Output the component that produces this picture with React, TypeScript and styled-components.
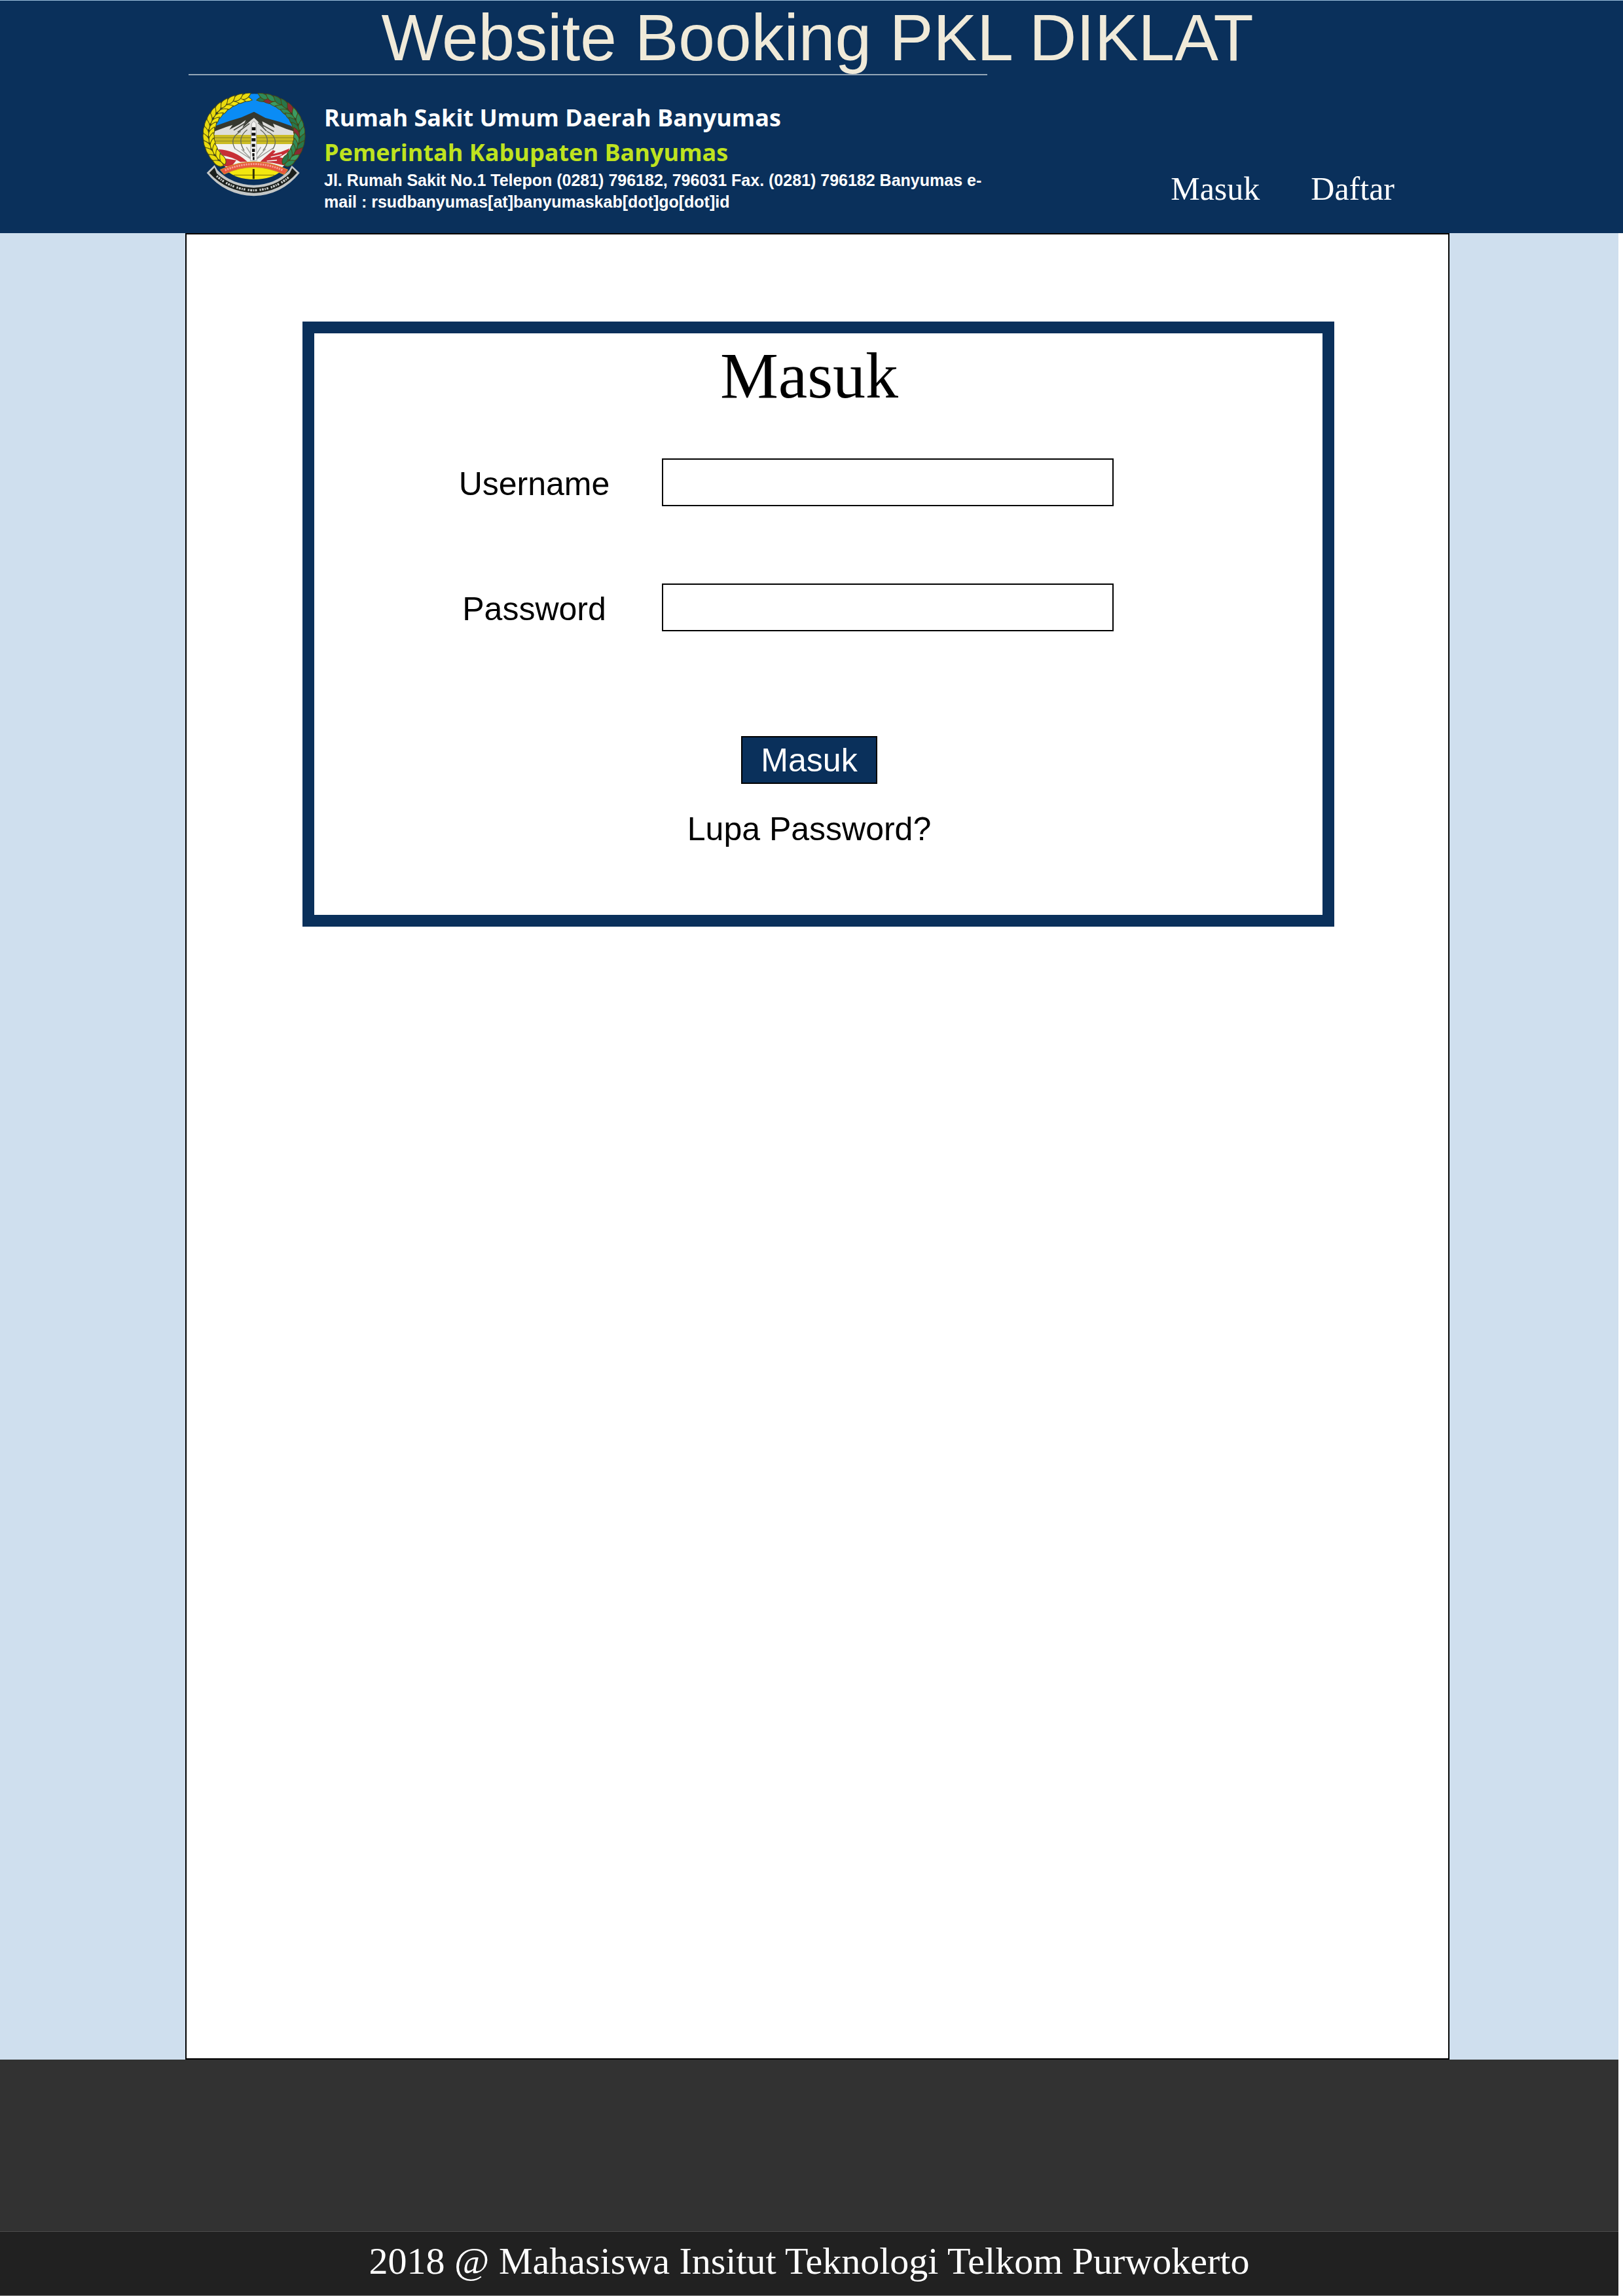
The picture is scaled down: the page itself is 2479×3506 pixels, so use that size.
import React from 'react';
import styled, { createGlobalStyle } from 'styled-components';

const navy = '#0a305b';
const sans = `'Liberation Sans', Arial, sans-serif`;
const serif = `'Liberation Serif', 'Times New Roman', serif`;

const GlobalStyle = createGlobalStyle`
  *, *::before, *::after { box-sizing: border-box; }
  body { margin: 0; background: #fff; }
`;

const Page = styled.div`
  display: flex;
  flex-direction: column;
  min-height: 100vh;
`;

const Header = styled.header`
  background: ${navy};
  border-top: 1px solid #9dbfdc;
  padding: 0 265px 0 283px;
`;

const SiteTitle = styled.h1`
  margin: 0;
  font: 400 100px/112px ${sans};
  color: #f0ead9;
  text-align: center;
`;

const Rule = styled.hr`
  width: 1220px;
  max-width: 100%;
  height: 2px;
  margin: 0 0 0 5px;
  border: 0;
  background: #94a5b6;
`;

const HeaderRow = styled.div`
  display: flex;
  justify-content: space-between;
  padding: 27px 84px 31px 26px;
`;

const Brand = styled.div`
  display: flex;
  gap: 28px;
`;

const BrandText = styled.div`
  padding-top: 11px;
`;

const BrandLine = styled.p<{ $color: string }>`
  margin: 0;
  font: 700 36px/53px 'Open Sans', sans-serif;
  color: ${(p) => p.$color};
`;

const Address = styled.address`
  font: 700 25px/33px ${sans};
  color: #fff;
`;

const Nav = styled.nav`
  display: flex;
  gap: 78px;
  align-self: flex-end;
  padding-bottom: 8px;
`;

const NavLink = styled.a`
  font: 400 50px/58px ${serif};
  color: #fff;
  text-decoration: none;
`;

const Backdrop = styled.main`
  flex: 1;
  display: flex;
  margin-right: 7px;
  padding: 0 258px 0 283px;
  background: #cfdfee;
`;

const Sheet = styled.div`
  flex: 1;
  padding: 133px 174px 133px 177px;
  background: #fff;
  border: 2px solid #000;
`;

const Card = styled.form`
  display: flex;
  flex-direction: column;
  align-items: center;
  padding: 9px 28px 102px 0;
  border: 18px solid ${navy};
`;

const CardTitle = styled.h2`
  margin: 0 0 70px;
  font: 400 100px/112px ${serif};
  color: #000;
`;

const Fields = styled.div`
  display: grid;
  gap: 118px;
  align-self: stretch;
  padding-left: 216px;
`;

const Field = styled.div`
  display: grid;
  grid-template-columns: 240px minmax(0, 690px);
  column-gap: 75px;
  align-items: center;
`;

const Label = styled.label`
  padding-top: 4px;
  font: 400 50px/58px ${sans};
  color: #000;
  text-align: center;
`;

const Input = styled.input`
  width: 100%;
  height: 73px;
  padding: 0 16px;
  font: 400 50px/58px ${sans};
  background: #fff;
  border: 2px solid #000;
  border-radius: 0;
`;

const Submit = styled.button`
  width: 208px;
  height: 73px;
  margin: 160px 0 40px;
  padding: 0;
  font: 400 50px/58px ${sans};
  color: #fff;
  background: ${navy};
  border: 2px solid #000;
  cursor: pointer;
`;

const ForgotLink = styled.a`
  font: 400 50px/58px ${sans};
  color: #000;
  text-decoration: none;
`;

const Footer = styled.footer`
  margin-right: 7px;
  background: #323232;
  padding-top: 262px;
`;

const Copyright = styled.p`
  margin: 0;
  padding: 12px 0 19px;
  border-top: 1px solid #4c4c4c;
  border-bottom: 1px solid #8a8a8a;
  background: #212121;
  font: 400 58px/66px ${serif};
  color: #fff;
  text-align: center;
`;

const Emblem = styled.svg`
  flex: none;
  width: 158px;
  height: 158px;
`;

type Leaf = { x: number; y: number; angle: number; fill: string };

/* Two rows of leaves following an elliptical arc, angles in degrees. */
function wreath(from: number, to: number, count: number, colors: string[]): Leaf[] {
  const leaves: Leaf[] = [];
  for (let i = 0; i < count; i += 1) {
    const deg = from + ((to - from) * i) / (count - 1);
    const t = (deg * Math.PI) / 180;
    const taper = Math.min(1, 0.5 + i / 8);
    const dir = Math.sign(from - to);
    const heading = (Math.atan2(184 * Math.cos(t), -205 * Math.sin(t)) * 180) / Math.PI + (dir > 0 ? 0 : 180);
    [-1, 1].forEach((side) => {
      const r = side * 14 * taper;
      leaves.push({
        x: 293 + (208 + r) * Math.cos(t),
        y: 230 + (176 + r) * Math.sin(t),
        angle: heading + side * dir * -20,
        fill: colors[(i * 2 + (side > 0 ? 1 : 0)) % colors.length],
      });
    });
  }
  return leaves;
}

const rice = wreath(260, 138, 14, ['#f2e410', '#e9da0e']);
const cotton = wreath(281, 402, 14, ['#27764a', '#2f8a58', '#8a2a33', '#2f8a58', '#3a9b62', '#27764a', '#2f8a58']);

function Logo() {
  return (
    <Emblem viewBox="56 36 474 474" role="img" aria-label="Lambang Kabupaten Banyumas">
      <defs>
        <clipPath id="shield">
          <ellipse cx="293" cy="232" rx="196" ry="192" />
        </clipPath>
      </defs>
      <g clipPath="url(#shield)">
        <rect x="90" y="36" width="410" height="170" fill="#0a8cf5" />
        <rect x="90" y="186" width="410" height="250" fill="#f2f2f0" />
        <path d="M90 196 L180 164 L235 148 L293 122 L345 150 L410 168 L500 200 V226 H90Z" fill="#35382f" />
        <path d="M100 216 L165 192 L195 182 L180 204 L230 178 L255 160 L240 196 L280 160 L293 150 L306 162 L338 194 L330 166 L388 196 L380 176 L440 200 L490 216 V234 H100Z" fill="#dededb" />
        <path d="M200 206 L262 168 M218 216 L272 176 M320 176 L384 212 M312 172 L350 210" stroke="#4a4d46" strokeWidth="5" />
        <rect x="100" y="228" width="390" height="42" fill="#cbbc24" />
        <path d="M100 241 H490 M100 256 H490" stroke="#8f8520" strokeWidth="3" />
        <path d="M232 212 C190 236 190 262 206 292 M262 204 C222 236 228 268 248 300 M352 212 C396 232 398 266 378 294 M322 204 C366 236 360 270 334 300" fill="none" stroke="#66695a" strokeWidth="4" />
        <path d="M204 290 L284 342 L236 294 M378 290 L300 342 L346 292 M258 284 L288 330 M324 284 L296 330" fill="none" stroke="#9a9a96" strokeWidth="4" />
        <path d="M130 294 Q200 296 262 350 L230 352 Q190 328 148 322Z M148 334 L212 344 L190 372 L144 372Z" fill="#c72f36" />
        <path d="M322 350 Q360 316 380 298 L392 302 L380 316 L416 306 L456 290 L450 306 L410 330 L440 338 V370 L380 356Z" fill="#c72f36" />
        <path d="M370 330 L420 318 M352 348 L398 344" stroke="#f2f2f0" strokeWidth="5" />
        <path d="M282 176 L292 164 L302 176 L306 346 H276Z" fill="#f4f4f2" stroke="#888" strokeWidth="2" />
        <path d="M283 200h17M282 225h18M282 250h18M283 276h15M284 299h13M285 319h10M287 336h8" stroke="#111" strokeWidth="14" />
      </g>
      <path d="M170 392 Q293 350 418 392 Q378 430 293 432 Q208 430 170 392Z" fill="#f3e70f" />
      <path d="M200 412 H386" stroke="#776d08" strokeWidth="3" />
      <path d="M291 384 V430" stroke="#333008" strokeWidth="9" />
      <g stroke="#4b4a12" strokeWidth="3">
        {[...rice, ...cotton].map((leaf, i) => (
          <path
            key={i}
            d="M-28 0 Q-8 -24 27 0 Q-8 24 -28 0Z"
            fill={leaf.fill}
            transform={`translate(${leaf.x} ${leaf.y}) rotate(${leaf.angle})`}
          />
        ))}
      </g>
      <path d="M138 388 Q293 314 448 388 L432 410 Q293 344 156 408Z" fill="#e8573f" stroke="#d29b27" strokeWidth="3" />
      <path d="M160 390 Q293 333 426 390" fill="none" stroke="#f6a090" strokeWidth="9" strokeDasharray="7 4" />
      <path d="M112 366 L76 402 Q160 504 292 508 Q420 504 502 402 L466 368 L454 390 Q390 456 292 458 Q192 456 126 390Z" fill="#c3c6c6" />
      <path d="M112 378 L88 402 Q166 488 292 494 Q412 490 490 402 L468 380 L456 404 Q392 466 292 470 Q190 466 122 404Z" fill="#1b1f1c" />
      <path d="M122 416 Q190 478 292 482 Q392 478 458 416" fill="none" stroke="#c9cccb" strokeWidth="10" strokeDasharray="7 4 9 4 5 4 8 12" />
    </Emblem>
  );
}

const fields = [
  { id: 'username', label: 'Username', type: 'text', autoComplete: 'username' },
  { id: 'password', label: 'Password', type: 'password', autoComplete: 'current-password' },
];

export default function App() {
  return (
    <Page>
      <GlobalStyle />
      <Header>
        <SiteTitle>Website Booking PKL DIKLAT</SiteTitle>
        <Rule />
        <HeaderRow>
          <Brand>
            <Logo />
            <BrandText>
              <BrandLine $color="#fff">Rumah Sakit Umum Daerah Banyumas</BrandLine>
              <BrandLine $color="#bfe31f">Pemerintah Kabupaten Banyumas</BrandLine>
              <Address>
                Jl. Rumah Sakit No.1 Telepon (0281) 796182, 796031 Fax. (0281) 796182 Banyumas e-
                <br />
                mail : rsudbanyumas[at]banyumaskab[dot]go[dot]id
              </Address>
            </BrandText>
          </Brand>
          <Nav>
            <NavLink href="#masuk">Masuk</NavLink>
            <NavLink href="#daftar">Daftar</NavLink>
          </Nav>
        </HeaderRow>
      </Header>
      <Backdrop>
        <Sheet>
          <Card onSubmit={(e) => e.preventDefault()}>
            <CardTitle>Masuk</CardTitle>
            <Fields>
              {fields.map((f) => (
                <Field key={f.id}>
                  <Label htmlFor={f.id}>{f.label}</Label>
                  <Input id={f.id} name={f.id} type={f.type} autoComplete={f.autoComplete} />
                </Field>
              ))}
            </Fields>
            <Submit type="submit">Masuk</Submit>
            <ForgotLink href="#lupa-password">Lupa Password?</ForgotLink>
          </Card>
        </Sheet>
      </Backdrop>
      <Footer>
        <Copyright>2018 @ Mahasiswa Insitut Teknologi Telkom Purwokerto</Copyright>
      </Footer>
    </Page>
  );
}
